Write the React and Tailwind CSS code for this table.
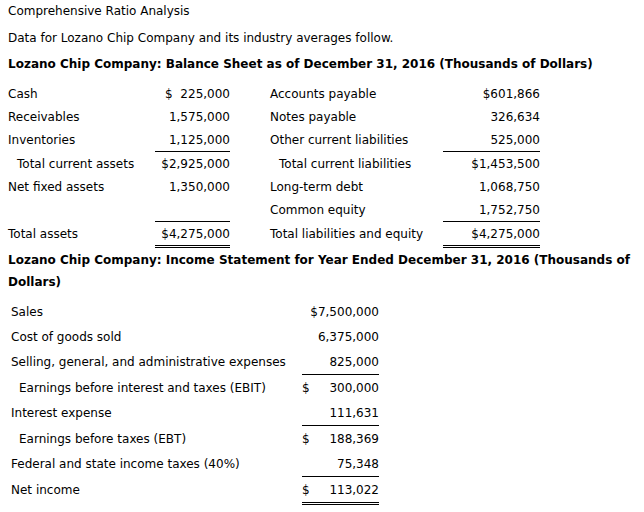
import React from "react";

const balanceRows = [
  { l1: "Cash", v1: "$  225,000", l2: "Accounts payable", v2: "$601,866" },
  { l1: "Receivables", v1: "1,575,000", l2: "Notes payable", v2: "326,634" },
  {
    l1: "Inventories",
    v1: "1,125,000",
    l2: "Other current liabilities",
    v2: "525,000",
    line: true,
  },
  {
    l1: "Total current assets",
    v1: "$2,925,000",
    l2: "Total current liabilities",
    v2: "$1,453,500",
    indent: true,
  },
  { l1: "Net fixed assets", v1: "1,350,000", l2: "Long-term debt", v2: "1,068,750" },
  { l1: "", v1: "", l2: "Common equity", v2: "1,752,750", line: true },
  {
    l1: "Total assets",
    v1: "$4,275,000",
    l2: "Total liabilities and equity",
    v2: "$4,275,000",
    double: true,
  },
];

const incomeRows = [
  { label: "Sales", value: "$7,500,000" },
  { label: "Cost of goods sold", value: "6,375,000" },
  { label: "Selling, general, and administrative expenses", value: "825,000", line: true },
  { label: "Earnings before interest and taxes (EBIT)", value: "300,000", dollar: true, indent: true },
  { label: "Interest expense", value: "111,631", line: true },
  { label: "Earnings before taxes (EBT)", value: "188,369", dollar: true, indent: true },
  { label: "Federal and state income taxes (40%)", value: "75,348", line: true },
  { label: "Net income", value: "113,022", dollar: true, double: true },
];

const rowH = (r, base) => {
  if (r.double) return base === 23 ? "h-[26px]" : "h-[28px]";
  if (r.line) return base === 23 ? "h-[24px]" : "h-[26px]";
  return base === 23 ? "h-[23px]" : "h-[25px]";
};

const rule = (r) =>
  r.double
    ? "border-b-[3px] border-double border-black"
    : r.line
    ? "border-b border-black"
    : "";

const App = () => {
  return (
    <div className="w-[644px] h-[512px] bg-white text-black text-[12px] font-['DejaVu_Sans',Verdana,sans-serif] overflow-hidden">
      <div className="pl-2 pt-[3px]">
        <p className="leading-[16px]">Comprehensive Ratio Analysis</p>
        <p className="leading-[16px] mt-[11px]">
          Data for Lozano Chip Company and its industry averages follow.
        </p>
        <p className="leading-[16px] mt-[10px] font-bold">
          Lozano Chip Company: Balance Sheet as of December 31, 2016 (Thousands of Dollars)
        </p>

        {/* Balance sheet */}
        <div className="mt-[10px] grid grid-cols-[147px_75px_40px_173px_97px]">
          {balanceRows.map((r, i) => (
            <React.Fragment key={i}>
              <div
                className={`${rowH(r, 23)} flex items-start pt-[3px] ${
                  r.indent ? "pl-[9px]" : ""
                }`}
              >
                {r.l1}
              </div>
              <div
                className={`${rowH(r, 23)} flex items-start pt-[3px] justify-end whitespace-pre ${rule(r)}`}
              >
                {r.v1}
              </div>
              <div />
              <div
                className={`${rowH(r, 23)} flex items-start pt-[3px] ${
                  r.indent ? "pl-[9px]" : ""
                }`}
              >
                {r.l2}
              </div>
              <div
                className={`${rowH(r, 23)} flex items-start pt-[3px] justify-end ${rule(r)}`}
              >
                {r.v2}
              </div>
            </React.Fragment>
          ))}
        </div>

        <p className="mt-[1px] font-bold leading-[22px] pr-2">
          Lozano Chip Company: Income Statement for Year Ended December 31, 2016 (Thousands of Dollars)
        </p>

        {/* Income statement */}
        <div className="mt-[6px] ml-[3px] grid grid-cols-[291px_77px]">
          {incomeRows.map((r, i) => (
            <React.Fragment key={i}>
              <div
                className={`${rowH(r, 25)} flex items-start pt-[4px] ${
                  r.indent ? "pl-[8px]" : ""
                }`}
              >
                {r.label}
              </div>
              <div
                className={`${rowH(r, 25)} flex items-start pt-[4px] justify-between ${rule(r)}`}
              >
                <span>{r.dollar ? "$" : ""}</span>
                <span>{r.value}</span>
              </div>
            </React.Fragment>
          ))}
        </div>
      </div>
    </div>
  );
};

export default App;
